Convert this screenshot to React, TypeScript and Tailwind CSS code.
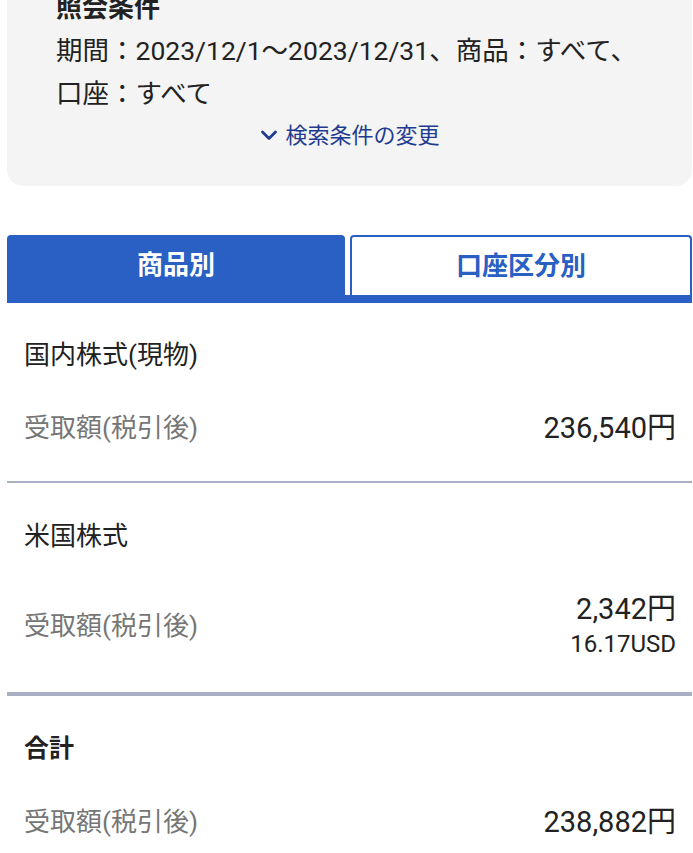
import React from 'react';

const font = { fontFamily: 'Roboto, "Noto Sans CJK JP", sans-serif' };

type Row = {
  title: string;
  yen: string;
  usd?: string;
};

const rows: Row[] = [
  { title: '国内株式(現物)', yen: '236,540円' },
  { title: '米国株式', yen: '2,342円', usd: '16.17USD' },
];

const ChevronDown: React.FC = () => (
  <svg width="20" height="14" viewBox="0 0 20 14" fill="none" aria-hidden="true">
    <polyline points="3.5,3 10,9.5 16.5,3" stroke="#1f3c90" strokeWidth="2.8" strokeLinecap="round" strokeLinejoin="round" />
  </svg>
);

const AmountRow: React.FC<{ yen: string; usd?: string }> = ({ yen, usd }) => (
  <div className="flex items-center justify-between mt-[37px]">
    <span className="text-[26px] leading-[36px] text-[#767676]">受取額(税引後)</span>
    <div className="flex flex-col items-end">
      <span className="text-[29px] leading-[36px] text-[#222]">{yen}</span>
      {usd && <span className="text-[24px] leading-[34px] text-[#222]">{usd}</span>}
    </div>
  </div>
);

export default function App() {
  return (
    <div className="min-h-screen w-[693px] bg-white overflow-hidden" style={font}>
      {/* 照会条件 card (scrolled, top is cut) */}
      <section className="-mt-[13px] ml-[7px] mr-[1px] rounded-b-2xl bg-[#f4f4f4] pl-[49px] pr-[20px] pb-[35px]">
        <h2 className="text-[26px] leading-[42px] font-bold text-[#222]">照会条件</h2>
        <p className="whitespace-nowrap text-[26.5px] leading-[43px] text-[#222]">期間：2023/12/1〜2023/12/31、商品：すべて、</p>
        <p className="text-[26.5px] leading-[43px] text-[#222]">口座：すべて</p>
        <button className="mx-auto mt-[6px] flex items-center gap-[6px] pr-[29px] text-[22px] leading-[30px] text-[#1f3c90]">
          <ChevronDown />
          検索条件の変更
        </button>
      </section>

      {/* tabs */}
      <div className="mt-[49px] ml-[7px] mr-[1px] flex gap-[5px] border-b-8 border-[#2a5fc4]">
        <div className="flex h-[60px] flex-1 items-center justify-center rounded-t-[4px] bg-[#2a5fc4] text-[26px] font-bold text-white">
          商品別
        </div>
        <div className="flex h-[60px] flex-1 items-center justify-center rounded-t-[4px] border-2 border-b-0 border-[#2a5fc4] bg-white text-[26px] font-bold text-[#2a5fc4]">
          口座区分別
        </div>
      </div>

      <div className="ml-[7px] mr-[1px]">
        {/* 国内株式 */}
        <div className="pl-[17px] pr-[16px] pt-[34px] pb-[35px]">
          <div className="text-[26px] leading-[36px] text-[#222]">{rows[0].title}</div>
          <AmountRow yen={rows[0].yen} />
        </div>
        <div className="h-[2px] bg-[#a9b0c3]" />

        {/* 米国株式 */}
        <div className="pl-[17px] pr-[16px] pt-[35px] pb-[31px]">
          <div className="text-[26px] leading-[36px] text-[#222]">{rows[1].title}</div>
          <AmountRow yen={rows[1].yen} usd={rows[1].usd} />
        </div>
        <div className="h-[4px] bg-[#a9b0c3]" />

        {/* 合計 */}
        <div className="pl-[17px] pr-[16px] pt-[35px] pb-[30px]">
          <div className="text-[25px] leading-[36px] font-bold text-[#222]">合計</div>
          <AmountRow yen="238,882円" />
        </div>
      </div>
    </div>
  );
}
